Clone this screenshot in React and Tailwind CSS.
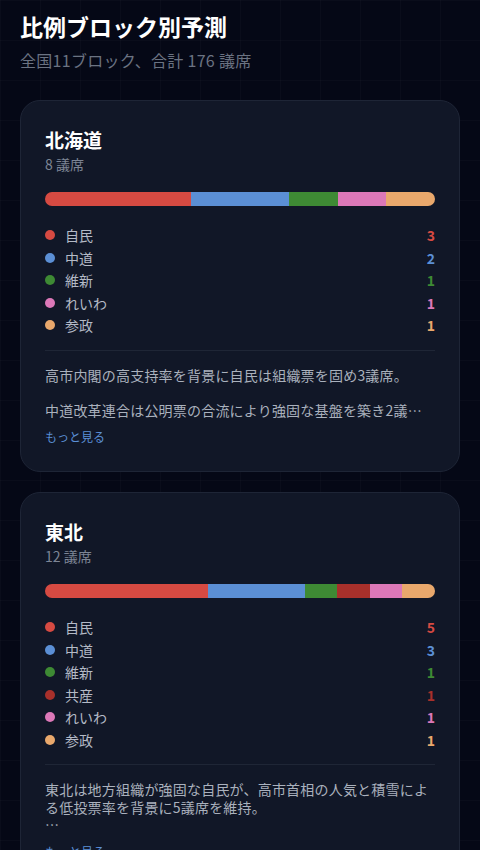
import React from "react";

const PARTY = {
  自民: { bar: "bg-[#d64a42]", text: "text-[#d64a42]" },
  中道: { bar: "bg-[#5b8fd5]", text: "text-[#5b8fd5]" },
  維新: { bar: "bg-[#3e8a34]", text: "text-[#3e8a34]" },
  共産: { bar: "bg-[#a8302b]", text: "text-[#a8302b]" },
  れいわ: { bar: "bg-[#dc78b8]", text: "text-[#dc78b8]" },
  参政: { bar: "bg-[#e9a86c]", text: "text-[#e9a86c]" },
};

const blocks = [
  {
    name: "北海道",
    seats: 8,
    parties: [
      ["自民", 3],
      ["中道", 2],
      ["維新", 1],
      ["れいわ", 1],
      ["参政", 1],
    ],
    note:
      "高市内閣の高支持率を背景に自民は組織票を固め3議席。\n\n中道改革連合は公明票の合流により強固な基盤を築き2議席を確保。",
  },
  {
    name: "東北",
    seats: 12,
    parties: [
      ["自民", 5],
      ["中道", 3],
      ["維新", 1],
      ["共産", 1],
      ["れいわ", 1],
      ["参政", 1],
    ],
    note:
      "東北は地方組織が強固な自民が、高市首相の人気と積雪による低投票率を背景に5議席を維持。\n\n中道改革連合は立憲の地盤に公明票が上積みされ3議席。",
  },
];

function BlockCard({ block }) {
  return (
    <div className="rounded-[20px] border border-[#1e2536] bg-[#111727] px-6 pt-[25px] pb-6">
      <h2 className="text-[19px] font-bold leading-[28px] text-white">{block.name}</h2>
      <p className="text-sm leading-5 text-[#7d8595]">{block.seats} 議席</p>

      {/* seat bar */}
      <div className="mt-[18px] flex h-3.5 overflow-hidden rounded-full">
        {block.parties.map(([p, n]) => (
          <div
            key={p}
            className={PARTY[p].bar}
            style={{ width: `${(n / block.seats) * 100}%` }}
          />
        ))}
      </div>

      {/* legend */}
      <ul className="mt-[18px]">
        {block.parties.map(([p, n]) => (
          <li key={p} className="flex h-[22.5px] items-center text-sm">
            <span className={`h-2.5 w-2.5 rounded-full ${PARTY[p].bar}`} />
            <span className="ml-2.5 text-[#b4bac6]">{p}</span>
            <span className={`ml-auto font-bold ${PARTY[p].text}`}>{n}</span>
          </li>
        ))}
      </ul>

      <div className="mt-[13px] border-t border-[#1f2636] pt-4">
        <p className="line-clamp-3 whitespace-pre-line text-sm leading-[17.5px] tracking-[0.2px] text-[#aab1bd]">
          {block.note}
        </p>
        <button className="mt-2.5 text-xs leading-4 text-[#5b8fd5]">もっと見る</button>
      </div>
    </div>
  );
}

export default function App() {
  return (
    <div
      className="min-h-screen bg-[#050816] bg-[linear-gradient(rgba(255,255,255,0.018)_1px,transparent_1px),linear-gradient(90deg,rgba(255,255,255,0.018)_1px,transparent_1px)] bg-[size:40px_40px] px-5 pt-[10px] pb-8"
      style={{ fontFamily: '"Noto Sans CJK JP", "Noto Sans", sans-serif' }}
    >
      <h1 className="text-[23px] font-bold leading-8 text-white">比例ブロック別予測</h1>
      <p className="mt-1.5 text-base leading-6 tracking-[0.3px] text-[#6b7382]">全国11ブロック、合計 176 議席</p>

      <div className="mt-7 flex flex-col gap-5">
        {blocks.map((b) => (
          <BlockCard key={b.name} block={b} />
        ))}
      </div>
    </div>
  );
}
